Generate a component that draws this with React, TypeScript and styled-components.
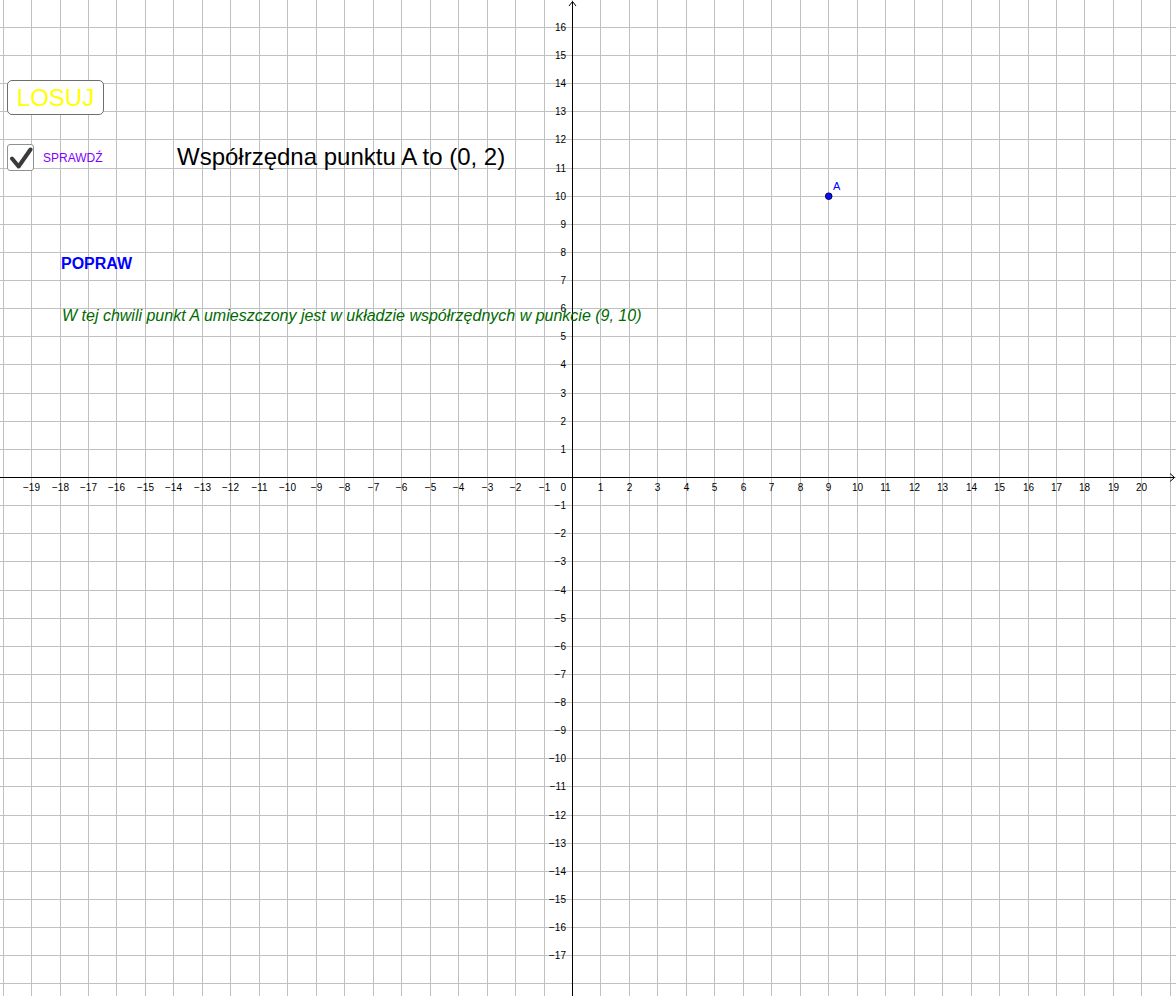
import React from "react";
import styled, { createGlobalStyle } from "styled-components";

const GlobalStyle = createGlobalStyle`
  html, body {
    margin: 0;
    padding: 0;
    background: #ffffff;
    overflow: hidden;
  }
  body {
    font-family: "Liberation Sans", Arial, sans-serif;
  }
`;

const W = 1176;
const H = 996;
const X0 = 572;
const Y0 = 477;
const SX = 28.47;
const SY = 28.13;

const gx = (k: number) => Math.round(X0 + SX * k);
const gy = (k: number) => Math.round(Y0 - SY * k);
const range = (a: number, b: number) => {
  const out: number[] = [];
  for (let i = a; i <= b; i++) out.push(i);
  return out;
};
const fmt = (k: number) => (k < 0 ? `\u2212${-k}` : `${k}`);

const Applet = styled.div`
  position: relative;
  width: ${W}px;
  height: ${H}px;
  overflow: hidden;
  background: #ffffff;
`;

const Graph = styled.svg`
  display: block;
  font-family: "Liberation Sans", Arial, sans-serif;
`;

const LosujButton = styled.button`
  position: absolute;
  left: 7px;
  top: 80px;
  width: 97px;
  height: 35px;
  box-sizing: border-box;
  display: flex;
  align-items: center;
  justify-content: center;
  padding: 0;
  background: #ffffff;
  border: 1.5px solid #6e6e6e;
  border-radius: 5px;
  color: #ffff00;
  font-family: "Liberation Sans", Arial, sans-serif;
  font-size: 24px;
  cursor: pointer;
`;

const CheckRow = styled.label`
  position: absolute;
  left: 7px;
  top: 144px;
  display: flex;
  align-items: center;
  gap: 9px;
  cursor: pointer;
`;

const CheckBox = styled.span`
  width: 27px;
  height: 27px;
  box-sizing: border-box;
  border: 1.5px solid #8a968a;
  border-radius: 3px;
  background: #ffffff;
  display: flex;
  align-items: center;
  justify-content: center;
`;

const CheckLabel = styled.span`
  font-family: "Liberation Sans", Arial, sans-serif;
  font-size: 12px;
  line-height: 12px;
  color: #8000ff;
`;

const Statement = styled.div`
  position: absolute;
  left: 177px;
  top: 145px;
  font-family: "Liberation Sans", Arial, sans-serif;
  font-size: 24px;
  line-height: 24px;
  color: #000000;
  white-space: nowrap;
`;

const Verdict = styled.div`
  position: absolute;
  left: 61px;
  top: 256px;
  font-family: "Liberation Sans", Arial, sans-serif;
  font-size: 16px;
  line-height: 16px;
  font-weight: bold;
  color: #0000ff;
  white-space: nowrap;
`;

const Hint = styled.div`
  position: absolute;
  left: 62px;
  top: 308px;
  font-family: "Liberation Sans", Arial, sans-serif;
  font-size: 16px;
  line-height: 16px;
  font-style: italic;
  color: #006a00;
  white-space: nowrap;
`;

const CoordinateGrid: React.FC = () => {
  const vKs = range(-20, 21);
  const hKs = range(-18, 16);
  const xLabels = range(-19, 20).filter((k) => k !== 0);
  const yLabels = range(-17, 16).filter((k) => k !== 0);
  const ax = X0 + 0.5;
  const ay = Y0 + 0.5;
  const pA = { x: X0 + SX * 9 + 0.5, y: Y0 - SY * 10 + 0.5 };

  return (
    <Graph width={W} height={H} viewBox={`0 0 ${W} ${H}`}>
      <g stroke="#c0c0c0" strokeWidth={1} shapeRendering="crispEdges">
        {vKs.map((k) => (
          <line key={`v${k}`} x1={gx(k) + 0.5} y1={0} x2={gx(k) + 0.5} y2={H} />
        ))}
        {hKs.map((k) => (
          <line key={`h${k}`} x1={0} y1={gy(k) + 0.5} x2={W} y2={gy(k) + 0.5} />
        ))}
      </g>

      <g stroke="#000000" strokeWidth={1} fill="none">
        <line x1={0} y1={ay} x2={1174} y2={ay} shapeRendering="crispEdges" />
        <line x1={ax} y1={2} x2={ax} y2={H} shapeRendering="crispEdges" />
        <polyline points={`1170,${ay - 4} 1174.5,${ay} 1170,${ay + 4}`} />
        <polyline points={`${ax - 3.5},6 ${ax},1.5 ${ax + 3.5},6`} />
      </g>

      <g fontSize={10} fill="#000000">
        {xLabels.map((k) => (
          <text key={`xl${k}`} x={gx(k) + 0.5} y={491} textAnchor="middle">
            {fmt(k)}
          </text>
        ))}
        <text x={566} y={491} textAnchor="end">
          0
        </text>
        {yLabels.map((k) => (
          <text key={`yl${k}`} x={566} y={gy(k) + 4} textAnchor="end">
            {fmt(k)}
          </text>
        ))}
      </g>

      <circle cx={pA.x} cy={pA.y} r={3.3} fill="#0a0aff" stroke="#000060" strokeWidth={1} />
      <text x={833} y={190} fontSize={11} fill="#0000ff">
        A
      </text>
    </Graph>
  );
};

const CheckMark: React.FC = () => (
  <svg width={24} height={24} viewBox="0 0 24 24">
    <path
      d="M3 12.5 L9.6 20.5 L21.5 3.5"
      fill="none"
      stroke="#3a3a3a"
      strokeWidth={4}
      strokeLinecap="round"
      strokeLinejoin="round"
    />
  </svg>
);

export default function App() {
  return (
    <>
      <GlobalStyle />
      <Applet>
        <CoordinateGrid />
        <LosujButton type="button">LOSUJ</LosujButton>
        <CheckRow>
          <CheckBox>
            <CheckMark />
          </CheckBox>
          <CheckLabel>SPRAWDŹ</CheckLabel>
        </CheckRow>
        <Statement>Współrzędna punktu A to (0, 2)</Statement>
        <Verdict>POPRAW</Verdict>
        <Hint>W tej chwili punkt A umieszczony jest w układzie współrzędnych w punkcie (9, 10)</Hint>
      </Applet>
    </>
  );
}
